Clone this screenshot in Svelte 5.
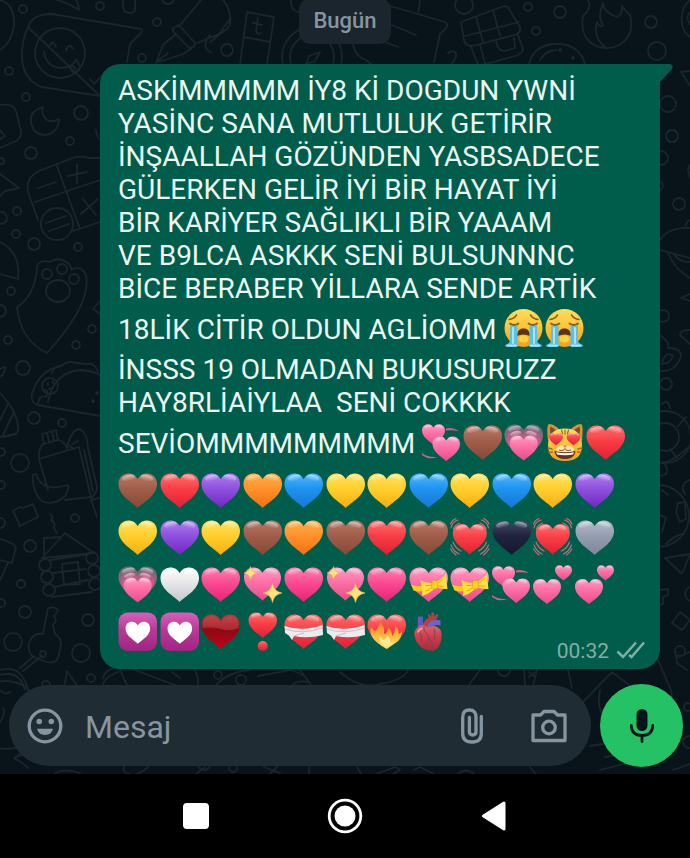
<script>
  const HEART = 'M19.7 38C15.5 33 .5 26 .5 14C.5 7.6 5 3.5 10.3 3.5C14.6 3.5 18 5.8 19.7 9.2C21.4 5.8 25 3.5 29.2 3.5C34.5 3.5 39 7.6 39 14C39 26 24 33 19.7 38Z';

  const tones = {
    brown: ['#b9796a', '#a05d49', '#884838'],
    red: ['#ff7070', '#f93d44', '#e01f35'],
    purple: ['#b27df2', '#8d50dd', '#7325c4'],
    orange: ['#ffb04a', '#ff912b', '#f2700e'],
    blue: ['#4fb9ff', '#1c93ee', '#1877d4'],
    yellow: ['#ffe25c', '#ffcf2e', '#f5ad0b'],
    black: ['#444a63', '#20233f', '#15172c'],
    grey: ['#b3bac9', '#959db0', '#7e8699'],
    white: ['#ffffff', '#e6e6e8', '#c4c6ca'],
    pink: ['#ff7fb0', '#fb4a92', '#ea1f77'],
    rose: ['#ff9cc4', '#fc6fa5', '#ea4a8a'],
    mauve: ['#6c6a72', '#94667c', '#a65f82'],
    berry: ['#a5627f', '#d0558b', '#e04d8c'],
    dark: ['#bd3b40', '#8d0a12', '#c4001d'],
    tile: ['#d75fb9', '#b83a98', '#a02482'],
    face: ['#ffdc60', '#fcc638', '#ee9f25'],
    flame: ['#f57b22', '#ffb337', '#ffe36a'],
    organ: ['#e0646a', '#c93f4b', '#a92a3c']
  };

  const lines = [
    { text: 'ASKİMMMMM İY8 Kİ DOGDUN YWNİ' },
    { text: 'YASİNC SANA MUTLULUK GETİRİR' },
    { text: 'İNŞAALLAH GÖZÜNDEN YASBSADECE' },
    { text: 'GÜLERKEN GELİR İYİ BİR HAYAT İYİ' },
    { text: 'BİR KARİYER SAĞLIKLI BİR YAAAM' },
    { text: 'VE B9LCA ASKKK SENİ BULSUNNNC' },
    { text: 'BİCE BERABER YİLLARA SENDE ARTİK' },
    { text: '18LİK CİTİR OLDUN AGLİOMM ', emoji: ['cry', 'cry'] },
    { text: 'İNSSS 19 OLMADAN BUKUSURUZZ' },
    { text: 'HAY8RLİAİYLAA  SENİ COKKKK' },
    { text: 'SEVİOMMMMMMMMM ', emoji: ['revolving', 'brown', 'growing', 'cat', 'red'] },
    { emoji: ['brown', 'red', 'purple', 'orange', 'blue', 'yellow', 'yellow', 'blue', 'yellow', 'blue', 'yellow', 'purple'] },
    { emoji: ['yellow', 'purple', 'yellow', 'brown', 'orange', 'brown', 'red', 'brown', 'beating', 'black', 'beating', 'grey'] },
    { emoji: ['growing', 'white', 'pink', 'sparkling', 'pink', 'sparkling', 'pink', 'ribbon', 'ribbon', 'revolving', 'two', 'two'] },
    { emoji: ['tile', 'tile', 'suit', 'exclamation', 'mending', 'mending', 'fire', 'organ'] }
  ];

  let draft = $state('');
</script>

{#snippet heart(tone, x = 0.5, y = 3.5, w = 38.5)}
  <g transform="translate({x - (0.5 * w) / 38.5} {y - (3.5 * w) / 38.5}) scale({w / 38.5})">
    <path d={HEART} fill="url(#tone-{tone})" />
    <ellipse cx="10.5" cy="7.8" rx="6.6" ry="3" fill="url(#gloss)" transform="rotate(-14 10.5 7.8)" />
    <ellipse cx="28.8" cy="7.8" rx="6.6" ry="3" fill="url(#gloss)" transform="rotate(14 28.8 7.8)" />
  </g>
{/snippet}

{#snippet spark(x, y, r)}
  <path
    d="M{x} {y - r}Q{x + r * 0.15} {y - r * 0.15} {x + r} {y}Q{x + r * 0.15} {y + r * 0.15} {x} {y + r}Q{x - r * 0.15} {y + r * 0.15} {x - r} {y}Q{x - r * 0.15} {y - r * 0.15} {x} {y - r}Z"
    fill="#ffe27a" stroke="#f3b63c" stroke-width=".6" />
{/snippet}

{#snippet emoji(name)}
  <svg class="emoji" viewBox="0 0 41 42" role="img" aria-label={name}>
    {#if name === 'cry'}
      <circle cx="20.5" cy="20" r="19" fill="url(#tone-face)" />
      <g fill="none" stroke="#8a5a20" stroke-width="1.5" stroke-linecap="round">
        <path d="M6 11.5Q11 11 13.500 7M35 11.5Q30 11 27.500 7" />
        <path d="M7 15.5Q11 18.5 15.500 15.5M34 15.5Q30 18.5 25.500 15.5" stroke-width="1.8" />
      </g>
      <ellipse cx="20.5" cy="31" rx="5" ry="3.5" fill="#ffd23c" />
      <path d="M14 28C14 23 16.500 20.500 20.500 20.500S27 23 27 28Q20.500 25 14 28Z" fill="#5e3218" />
      <path d="M7 17Q11 19.500 14.500 17V35Q17 38.500 13 39H4Q0 38 4 36Q7 35 7 32ZM34 17Q30 19.500 26.500 17V35Q24 38.500 28 39H37Q41 38 37 36Q34 35 34 32Z" fill="#5cc0e0" />
      <path d="M10 20V35M31 20V35M5 37.500H13M28 37.500H36" stroke="#a9e6f5" stroke-width="2" stroke-linecap="round" />
    {:else if name === 'revolving'}
      <path d="M24 6.500Q31 5 37 9Q31 8 24 8.500ZM0 31Q5 35.500 15 35Q7 38.500 0 33Z" fill="#d35f91" />
      {@render heart('rose', 0, 2.3, 23)}
      {@render heart('rose', 10.5, 14.5, 27.5)}
    {:else if name === 'two'}
      {@render heart('rose', 0, 15, 28)}
      {@render heart('rose', 22, 1.3, 17)}
    {:else if name === 'growing'}
      {@render heart('mauve', 0.5, 2.5, 38.5)}
      {@render heart('berry', 3, 8, 33)}
      {@render heart('rose', 5.7, 13.5, 28)}
    {:else if name === 'cat'}
      <path d="M3 18C2 9 2 3 4 2C8 2 12 5 15 8H25C28 5 32 2 36 2C38 3 38 9 37 18Z" fill="#d9932f" />
      <path d="M5.500 12Q4.500 7 5.500 4.500Q9 6 12 9ZM34.500 12Q35.500 7 34.500 4.500Q31 6 28 9Z" fill="#7c4a35" />
      <path d="M20 6.500C31 6.500 37 12 37 23C37 34 31 39 20 39S3 34 3 23C3 12 9 6.500 20 6.500Z" fill="url(#tone-face)" />
      <path d="M20 8V12.500M16.500 8L17.500 11.500M23.500 8L22.500 11.500M3 26L7 27M4 30.500L7.500 30M37 26L33 27M36 30.500L32.500 30" fill="none" stroke="#a86a24" stroke-width="1.300" stroke-linecap="round" />
      <ellipse cx="20" cy="27.500" rx="9" ry="4" fill="#ffe9b0" />
      <path d="M9.500 29Q20 31.500 30.500 29C30 34.500 26 37 20 37S10 34.500 9.500 29Z" fill="#67311d" />
      <path d="M11 30.200Q20 32.500 29 30.200L28 32.500Q20 34 12 32.500Z" fill="#fff" />
      <path d="M17.800 23.500H22.200L20 26Z" fill="#ef6b6f" />
      <path d="M14 28Q18.500 29.500 20 26.500Q21.500 29.500 26 28" fill="none" stroke="#8a4f22" stroke-width="1" />
      {@render heart('red', 4, 11, 14)}
      {@render heart('red', 21.5, 11, 14)}
    {:else if name === 'beating'}
      {@render heart('red', 2.8, 7, 34)}
      <g fill="none" stroke="#b96f7c" stroke-width="1.200" stroke-linecap="round">
        <path d="M1 11Q2 5 8 3M3.500 12Q4.500 8 9.500 6M.5 7Q2 3 6 1.500M38.500 11Q37.500 5 31.500 3M36 12Q35 8 30 6M39 7Q37.500 3 33.500 1.500" />
        <path d="M1 28Q3 34 9 37M3 25Q5 31 11 34M.5 32Q3 36 6 38M38.500 28Q36.500 34 30.500 37M36.500 25Q34.500 31 28.500 34M39 32Q36.500 36 33.500 38" />
      </g>
    {:else if name === 'sparkling'}
      {@render heart('rose', 1, 3.5, 37)}
      {@render spark(7.5, 9, 6.5)}
      {@render spark(29.5, 29, 9.5)}
    {:else if name === 'ribbon'}
      {@render heart('rose')}
      <path d="M2 20.500Q7 23 13 22L14 27Q9 28 4.500 26.500Z" fill="#f8cd18" />
      <path d="M24 19Q17 19.500 11 16Q14 24 13 32Q20 30 25 25ZM27 18Q33 15 37.500 9Q37 17 38.500 25Q32 25.500 27 23Z" fill="#ffdf38" />
      <path d="M24 21Q20 22 17 21.500M24 23Q20 26 17 27M29 19Q32 17 34 15M29 22Q32 22.500 34 22" fill="none" stroke="#e3ab12" stroke-width="1" stroke-linecap="round" />
      <rect x="22.500" y="16.500" width="6" height="8.500" rx="2.500" fill="#ffd024" stroke="#e3a512" stroke-width=".7" />
    {:else if name === 'tile'}
      <rect x=".5" y="1.500" width="38.500" height="38.500" rx="9" fill="url(#tone-tile)" />
      <path d={HEART} fill="#fff" transform="translate(7.200 8.500) scale(.64)" />
    {:else if name === 'suit'}
      <path d={HEART} fill="url(#tone-dark)" />
      <path d="M2 17Q0 6 10 5Q17 5 19.700 11Q23 5 29.500 5Q39 6 37.500 17Q28 21 19.700 18Q10 15 2 17Z" fill="#d0575a" opacity=".4" />
    {:else if name === 'exclamation'}
      {@render heart('red', 5.5, 1.5, 28.5)}
      <circle cx="19.700" cy="35" r="5" fill="url(#tone-red)" />
    {:else if name === 'mending'}
      {@render heart('red')}
      <path d="M.5 15Q18 21 38.500 14L39 24Q24 28 10 25L8 29L5 24.500L1 22Z" fill="#ececee" />
      <path d="M1 18Q18 24 38.500 17M10 25L20 22" fill="none" stroke="#c3c0c6" stroke-width="1" />
    {:else if name === 'fire'}
      {@render heart('red')}
      <path d="M19.700 38Q9 32 5 26Q2 20 4.500 16Q6 19 8 20Q11 18 13 11Q18 15 17 23Q20 23 21 17Q25 19 25 25Q28 22 28.500 15Q32 18 31.500 23Q34 22 35 20Q35 27 30 31Z" fill="url(#tone-flame)" />
      <path d="M19 36Q10 31 13 25Q15 29 17 29Q20 27 20 24Q24 28 23 32Q26 31 27 28Q28 33 19 36Z" fill="#ffe89a" />
    {:else if name === 'organ'}
      <path d="M14 18C14 11 16 8 20 7L18.500 3.500H21L22 6L22.500 1.500H25L25.500 6L27.500 3L29.500 4L27 9C28 13 26 16 22 18Z" fill="#b93c40" />
      <path d="M9 17Q8 11 9 5.500H14Q13 10 15 14Z" fill="#6558c0" />
      <path d="M18 18C18 11 23 8 31.500 9.500V14.500C26 13.500 23.500 14 22.500 19Z" fill="#6e62cf" />
      <path d="M8 17C12 13 16 14 19 17C24 14 30 15 32 20C34 28 31 38 24 40C15 40 7 34 5.500 25C5 21 6 19 8 17Z" fill="url(#tone-organ)" />
      <path d="M15 16C14 22 20 22 20 28M10 21Q14 24 12 30M20 28L17 33M20 28Q25 31 23 37M25 18Q27 23 25 28" fill="none" stroke="#8e3a62" stroke-width="1" stroke-linecap="round" />
      <path d="M9 21Q10 18 13 17.500" stroke="#f6a2a2" stroke-width="1.500" stroke-linecap="round" fill="none" />
    {:else}
      {@render heart(name)}
    {/if}
  </svg>
{/snippet}

<svg class="defs" aria-hidden="true">
  <defs>
    {#each Object.entries(tones) as [name, stops]}
      <linearGradient id="tone-{name}" x1="0" y1="0" x2="0" y2="1">
        <stop offset="0" stop-color={stops[0]} />
        <stop offset=".45" stop-color={stops[1]} />
        <stop offset="1" stop-color={stops[2]} />
      </linearGradient>
    {/each}
    <linearGradient id="gloss" x1="0" y1="0" x2="0" y2="1">
      <stop offset="0" stop-color="#fff" stop-opacity=".55" />
      <stop offset="1" stop-color="#fff" stop-opacity="0" />
    </linearGradient>
  </defs>
</svg>

<div class="screen">
  <main class="chat">
    <svg class="doodles" viewBox="0 0 690 774" preserveAspectRatio="xMidYMin slice" aria-hidden="true">
      <!-- left column -->
      <path d="M0 0Q14 4 14 22T0 50M50 -3Q70 4 79 10Q79 3 74 -3M123 -3V7Q124 13 130 13T135 7V-3" />
      <path d="M28 27Q32 14 52 14L141 29Q143 31 140 34L130 44L127 62M100 96L42 87Q22 80 22 55Q22 40 28 27Z" />
      <circle cx="60" cy="53" r="25" />
      <path d="M44 51Q45 66 60 68Q72 68 76 60M49 47Q53 38 56 47M66 50Q70 42 73 49M68 66L73 72Q79 73 80 67L77 60M72 65L76 69M90 79L94 84L105 72" />
      <circle cx="23" cy="9" r="4" /><circle cx="100" cy="6" r="4" /><circle cx="9" cy="71" r="4" />
      <circle cx="26" cy="97" r="4" /><circle cx="81" cy="113" r="7" /><circle cx="70" cy="141" r="4" />
      <circle cx="31" cy="153" r="6" /><circle cx="17" cy="211" r="4" /><circle cx="1" cy="161" r="3" />
      <path d="M43 107Q29 111 31 123Q34 135 45 135Q58 134 59 119Q50 124 45 118Q41 113 43 107ZM0 105Q13 103 16 111L21 131Q22 137 16 141L0 148M0 130L5 136L0 139" />
      <path d="M0 174L19 188L5 191L0 196M100 158L88 158Q80 155 70 159L39 171Q25 178 28 192L38 220M57 166L80 229M35 202L100 180M38 188L56 182M77 165V183M68 176L87 172M83 199L96 215M98 199L81 214M96 130Q97 140 103 142" />
      <circle cx="57" cy="224" r="16" /><path d="M46 223L66 216M49 231L69 224M73 231L100 222" />
      <circle cx="1" cy="218" r="6" /><circle cx="16" cy="234" r="4" /><circle cx="34" cy="244" r="6" /><circle cx="78" cy="247" r="4" />
      <path d="M0 242Q21 252 18 279L0 274M17 307Q35 296 37 267Q39 259 50 262Q58 256 68 263Q72 267 71 270Q81 264 86 275Q92 304 47 353Q20 340 17 307Z" />
      <circle cx="47" cy="274" r="5" /><circle cx="62" cy="269" r="5" /><circle cx="74" cy="279" r="5" /><ellipse cx="58" cy="291" rx="12" ry="11" />
      <circle cx="11" cy="291" r="4" /><circle cx="0" cy="311" r="6" /><circle cx="8" cy="340" r="4" /><circle cx="92" cy="329" r="4" />
      <circle cx="76" cy="345" r="4" /><circle cx="23" cy="368" r="7" /><path d="M100 301L93 309L100 314M0 369L5 367Q5 374 0 377" />
      <path d="M100 416L38 405Q29 402 33 391Q40 370 61 366Q68 360 76 363L86 364Q95 362 98 372M48 402Q54 371 82 370Q93 371 100 375M52 373Q54 366 61 366M38 404Q39 395 46 397Q50 388 42 390" />
      <circle cx="50" cy="386" r="8" /><circle cx="97" cy="393" r="1" /><circle cx="93" cy="401" r="1" /><path d="M48 383v2M53 381v2M49 389Q53 389 54 385" />
      <circle cx="34" cy="418" r="6" /><circle cx="62" cy="423" r="4" /><path d="M0 393Q19 413 18 431Q15 436 0 437M8 404L0 420M14 412L2 437" />
      <path d="M42 434L56 430L58 440L44 444ZM47 433L49 442M52 431L54 441M43 444Q38 449 39 459L48 490M57 440Q63 439 68 450M39 459L79 447L91 497L65 500M67 449Q70 430 80 429Q88 434 88 448L97 487Q97 493 91 498M84 450L93 491M72 444L78 441M74 449L67 444" />
      <path d="M33 475L36 474Q42 493 68 485Q70 489 64 497Q55 505 44 502Q32 495 33 475ZM0 437L16 434" />
      <circle cx="20" cy="463" r="9" /><circle cx="1" cy="452" r="4" /><circle cx="1" cy="485" r="4" /><circle cx="75" cy="518" r="4" /><circle cx="0" cy="523" r="5" />
      <path d="M13 511L20 507L23 508L33 504L38 517L20 526ZM50 514Q54 516 51 520Q56 523 54 528L57 533M100 498L91 500L97 517" />
      <circle cx="30" cy="546" r="6" /><circle cx="21" cy="584" r="4" /><circle cx="1" cy="603" r="4" /><circle cx="25" cy="612" r="6" />
      <path d="M0 539Q12 542 16 547L12 563L0 560M8 563L0 580M44 558V538L60 537M42 558L65 533L94 553ZM50 560L90 554M53 573L86 569M54 587L88 580M52 597L92 592M62 564L78 562L80 584L64 585Z" />
      <circle cx="45" cy="565" r="6" /><circle cx="47" cy="577" r="6" /><circle cx="49" cy="590" r="6" /><circle cx="92" cy="558" r="6" /><circle cx="94" cy="571" r="6" /><circle cx="95" cy="584" r="6" />
      <circle cx="88" cy="620" r="6" /><circle cx="81" cy="653" r="9" /><circle cx="13" cy="642" r="9" /><circle cx="43" cy="654" r="3" /><circle cx="91" cy="678" r="4" /><circle cx="46" cy="685" r="4" />
      <path d="M48 608Q56 606 58 611L54 616L56 621L53 625L55 634Q61 637 61 645L58 658Q55 664 47 662L33 657Q27 651 29 643Q33 632 43 634ZM42 656L23 671M34 656L20 668M0 670Q22 664 28 690M0 675Q20 670 25 690M64 690L67 671L80 690" />
      <circle cx="6" cy="715" r="34" /><path d="M0 690Q5 696 10 692M0 722Q6 714 3 708M14 758L25 754M28 768Q22 762 14 758Q22 753 23 748L28 756" />
      <!-- top strip -->
      <circle cx="157" cy="22" r="4" /><circle cx="142" cy="58" r="4" /><circle cx="227" cy="50" r="6" /><circle cx="168" cy="-2" r="6" />
      <path d="M173 28L179 25L195 43Q195 48 189 48L173 31ZM181 24L201 0M197 43L219 34L230 19Q230 6 221 -2M210 42L228 28Q232 20 230 18M176 34L163 45L156 63M191 49L183 54L159 62M158 61L168 53M210 35Q200 48 211 52" />
      <path d="M247 12L274 17L267 64M247 12L240 64M244 37L270 42M258 18L256 31Q257 35 261 33M253 23L262 25" />
      <circle cx="312" cy="57" r="22" /><circle cx="312" cy="57" r="30" /><path d="M320 52L309 56L306 64L315 61ZM298 12Q290 10 291 -2" />
      <path d="M390 6L445 22Q449 25 446 28L440 34L434 62M392 25L416 35M380 40L398 47M353 45Q356 57 366 60L371 64M448 53Q457 48 456 57L452 64M418 12Q420 6 420 -2" />
      <circle cx="464" cy="5" r="9" /><circle cx="528" cy="7" r="4" /><circle cx="536" cy="31" r="4" /><circle cx="560" cy="12" r="6" /><circle cx="651" cy="22" r="6" /><circle cx="657" cy="51" r="9" />
      <path d="M461 22L504 6Q509 6 510 11L520 27Q521 33 515 35L472 46Q465 46 464 40ZM476 17L483 42M493 10L500 36M465 36L519 22M471 47L478 64M480 45L485 63M518 35L523 49Q523 53 515 56L486 64M496 41Q498 52 505 51L515 48L514 38" />
      <path d="M529 64Q534 44 557 44Q579 44 585 64M540 60Q545 51 556 50" /><circle cx="560" cy="50" r="1" /><circle cx="573" cy="58" r="1" />
      <path d="M586 -2Q594 6 583 16Q580 33 590 42Q604 53 621 44Q635 34 630 15Q626 12 622 6Q623 14 617 17Q603 12 603 3Q597 17 603 25Q600 29 597 22Q593 38 605 47" />
      <path d="M690 0Q680 8 682 24Q683 32 690 37M690 12Q685 18 690 24" />
      <!-- right strip -->
      <path d="M690 71L681 72L690 86M690 164L688 170L690 178" />
      <circle cx="668" cy="104" r="8" /><circle cx="672" cy="136" r="6" /><circle cx="661" cy="158" r="7" /><circle cx="658" cy="186" r="5" /><circle cx="679" cy="204" r="6" />
      <path d="M660 240Q668 227 690 228M660 250L690 258M685 226Q687 221 690 220M668 252Q673 268 690 278M674 254Q680 263 690 262M690 294L681 298L690 301M690 330Q680 330 680 335L690 344" />
      <circle cx="663" cy="316" r="6" /><circle cx="666" cy="384" r="6" /><circle cx="665" cy="437" r="14" /><circle cx="665" cy="437" r="26" />
      <path d="M660 335Q670 342 668 348Q681 348 681 356Q676 372 661 371M662 364Q665 350 673 356Q670 364 662 364M662 404Q668 398 670 408M678 426L686 417M662 463Q672 462 690 446M670 449L678 459M660 476L666 474Q669 468 663 462" />
      <circle cx="658" cy="516" r="31" /><path d="M678 503L685 502L686 519L680 522L676 512ZM660 515L666 518L662 532M666 544Q676 534 684 534M662 490L668 495M690 480Q679 484 685 494M665 558L690 554L682 574ZM660 590L668 589V595L663 597V604L660 605" />
      <path d="M680 612L690 620L682 630L672 623Z" /><circle cx="692" cy="594" r="7" /><circle cx="680" cy="651" r="5" /><path d="M676 655L677 663L687 670M679 657L690 652" />
      <circle cx="688" cy="707" r="4" /><circle cx="689" cy="742" r="6" />
      <!-- bottom strips -->
      <path d="M103 678Q105 670 114 668M120 670L126 683Q130 690 140 690M118 672Q98 680 105 690M135 670L172 684L190 690M194 668Q200 678 197 690M172 672L180 678M212 690Q225 672 250 670M258 676L290 670Q308 675 308 682Q298 680 292 685M300 670L312 686M340 672Q360 690 380 684Q404 680 408 670M465 690L480 670M525 686L524 670M537 670L532 690M568 670L572 688M583 702L612 672L636 690M645 630L671 690L673 704M600 690Q597 704 602 714M590 746L615 742M600 770L648 758M605 757L643 750M673 770L690 764" />
      <circle cx="218" cy="675" r="4" /><circle cx="241" cy="680" r="5" /><circle cx="504" cy="670" r="6" />
      <path d="M124 767Q122 773 130 774M148 767Q140 774 136 774M55 773Q65 768 80 773M205 767L196 774M264 767L280 773M270 774L277 767M309 767V774M357 767L361 774M376 774L395 767L400 770L393 774M414 770L420 767L434 774M458 774Q466 767 474 774M530 767L536 774M529 672L535 677M535 672L529 677" />
      <circle cx="233" cy="768" r="4" /><circle cx="204" cy="764" r="6" />
    </svg>

    <div class="day">Bugün</div>

    <article class="bubble">
      <svg class="tip" viewBox="0 0 14 20" aria-hidden="true"><path d="M0 0H11Q15 1 13 5L1 18L0 20Z" fill="#005d4b" /></svg>
      {#each lines as line}
        <div class="line" class:mixed={line.text && line.emoji} class:row={!line.text}>
          {#if line.text}<span>{line.text}</span>{/if}
          {#each line.emoji ?? [] as name}{@render emoji(name)}{/each}
        </div>
      {/each}
      <footer>
        <time>00:32</time>
        <svg width="30" height="20" viewBox="0 0 30 20" fill="none" stroke="#80afa5" stroke-width="2.500" aria-label="İletildi" role="img">
          <path d="M1.500 10.500L7 16L20 1.500M13 14L15.500 16L28 1.500" />
        </svg>
      </footer>
    </article>

    <form class="composer" onsubmit={(e) => e.preventDefault()}>
      <div class="field">
        <button type="button" aria-label="Emoji">
          <svg width="36" height="36" viewBox="0 0 36 36">
            <circle cx="18" cy="18" r="15.800" fill="none" stroke="currentColor" stroke-width="3.300" />
            <circle cx="12.200" cy="13.500" r="2.800" fill="currentColor" /><circle cx="24.300" cy="13.500" r="2.800" fill="currentColor" />
            <path d="M10 20.800H26Q24.500 27 18 27T10 20.800Z" fill="currentColor" />
          </svg>
        </button>
        <input type="text" aria-label="Mesaj" placeholder="Mesaj" bind:value={draft} />
        <button type="button" class="clip" aria-label="Dosya ekle">
          <svg width="24" height="36" viewBox="0 0 24 36" fill="none" stroke="currentColor" stroke-width="3.300" stroke-linecap="round">
            <path d="M21.300 8.500V25.500Q21.300 34 12 34T2.700 25.500V9.500Q2.700 2 9.400 2T16 9.500V23.500Q16 27 12.700 27T9.400 23.500V9.500" />
          </svg>
        </button>
        <button type="button" aria-label="Kamera">
          <svg width="36" height="36" viewBox="0 0 36 36" fill="none" stroke="currentColor" stroke-width="3.300" stroke-linejoin="round">
            <path d="M2 7H9.500L13 3.500H23L26.500 7H34V32.500H2Z" /><circle cx="18" cy="19.500" r="6.300" />
          </svg>
        </button>
      </div>
      <button type="button" class="mic" aria-label="Sesli mesaj">
        <svg width="26" height="36" viewBox="0 0 26 36">
          <rect x="7.500" y="1" width="11" height="22" rx="5.500" fill="#08141b" />
          <path d="M2.300 17.500Q2.500 27.500 13 27.500T23.700 17.500M13 27.500V33.500" fill="none" stroke="#08141b" stroke-width="2.800" stroke-linecap="round" />
        </svg>
      </button>
    </form>
  </main>

  <nav class="system">
    <button type="button" aria-label="Son uygulamalar">
      <svg width="26" height="26" viewBox="0 0 26 26"><rect width="26" height="26" rx="4" fill="#fff" /></svg>
    </button>
    <button type="button" aria-label="Ana ekran">
      <svg width="36" height="36" viewBox="0 0 36 36"><circle cx="18" cy="18" r="15.800" fill="none" stroke="#fff" stroke-width="2.800" /><circle cx="18" cy="18" r="10.500" fill="#fff" /></svg>
    </button>
    <button type="button" aria-label="Geri">
      <svg width="26" height="32" viewBox="0 0 26 32"><path d="M2.500 16L23 3V29Z" fill="#fff" stroke="#fff" stroke-width="3" stroke-linejoin="round" /></svg>
    </button>
  </nav>
</div>

<style>
  :global(body) {
    margin: 0;
    background: #000;
  }
  .defs {
    position: absolute;
    width: 0;
    height: 0;
  }
  .screen {
    display: flex;
    flex-direction: column;
    min-height: 100vh;
    font-family: Roboto, "Noto Sans", sans-serif;
  }
  button {
    display: flex;
    align-items: center;
    justify-content: center;
    flex: none;
    padding: 0;
    border: 0;
    background: none;
    color: #8696a0;
  }
  .chat {
    position: relative;
    flex: 1;
    display: flex;
    flex-direction: column;
    overflow: hidden;
    background: #08131a;
  }
  .doodles {
    position: absolute;
    inset: 0;
    width: 100%;
    height: 100%;
    fill: none;
    stroke: #1b252d;
    stroke-width: 1.8;
    stroke-linejoin: round;
    stroke-linecap: round;
  }
  .day {
    position: relative;
    align-self: center;
    margin-top: -2px;
    padding: 0 14px;
    border-radius: 12px;
    background: #1a252d;
    color: #8696a0;
    font-size: 22px;
    font-weight: 500;
    line-height: 46px;
  }
  .bubble {
    position: relative;
    margin: 20px 30px 0 100px;
    padding: 10px 14px 6px 18px;
    border-radius: 20px 0 20px 20px;
    background: #005d4b;
    color: #ecf7f3;
  }
  .tip {
    position: absolute;
    top: 0;
    left: 100%;
    width: 14px;
    height: 20px;
    margin-left: -1px;
  }
  .line {
    display: flex;
    align-items: center;
    font-size: 28px;
    line-height: 33px;
    white-space: pre;
  }
  .mixed {
    height: 48px;
  }
  .row {
    display: grid;
    grid-template-columns: repeat(12, 1fr);
    max-width: 498px;
    height: 47px;
  }
  .emoji {
    flex: none;
    width: 41px;
    height: 42px;
  }
  footer {
    position: relative;
    display: flex;
    align-items: center;
    justify-content: flex-end;
    gap: 7px;
    margin-top: -16px;
    color: #80afa5;
    font-size: 21px;
    line-height: 24px;
  }
  .composer {
    position: relative;
    display: flex;
    align-items: center;
    gap: 9px;
    margin-top: auto;
    padding: 14px 7px 7px 9px;
  }
  .field {
    flex: 1;
    display: flex;
    align-items: center;
    min-width: 0;
    height: 81px;
    padding: 0 24px 0 18px;
    border-radius: 41px;
    background: #202c34;
  }
  input {
    flex: 1;
    min-width: 0;
    padding: 2px 22px 0;
    border: 0;
    outline: 0;
    background: none;
    color: #e9edef;
    font: 32px Roboto, "Noto Sans", sans-serif;
  }
  input::placeholder {
    color: #8696a0;
    opacity: 1;
  }
  .clip {
    margin-right: 47px;
  }
  .mic {
    width: 83px;
    height: 83px;
    border-radius: 50%;
    background: #24c265;
  }
  .system {
    display: flex;
    align-items: center;
    justify-content: center;
    gap: 99px;
    height: 84px;
    background: #000;
  }
  .system button {
    width: 50px;
    height: 50px;
  }
</style>
